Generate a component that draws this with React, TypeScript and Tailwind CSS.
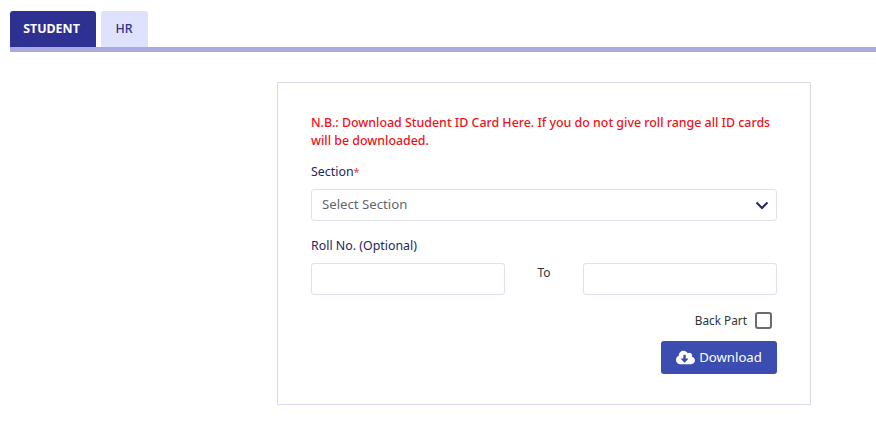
import { FaCloudDownloadAlt } from "react-icons/fa";

export default function App() {
  return (
    <div className="min-h-[422px] bg-white pt-[11px] font-['Noto_Sans',sans-serif] text-[12.4px]">
      {/* Tabs */}
      <div className="ml-[10px] flex gap-[5px] border-b-[5px] border-[#a9a9e3]">
        <button className="h-[36px] w-[86px] rounded-t-[3px] bg-[#2e3092] pr-[3px] text-[12.4px] font-bold text-white">
          STUDENT
        </button>
        <button className="h-[36px] w-[47px] rounded-t-[3px] bg-[#dee2fc] pr-[1px] text-[12.4px] font-medium text-[#2e3092]">
          HR
        </button>
      </div>

      {/* Card */}
      <div className="ml-[277px] mt-[30px] h-[323px] w-[534px] border border-[#d9d9ef] px-[33px] pt-[31px]">
        <p className="text-[12.4px] leading-[18px] font-medium text-[#e8141c]">
          N.B.: Download Student ID Card Here. If you do not give roll range all ID cards will be downloaded.
        </p>

        <label className="mt-[13px] block leading-[18px] text-[#26265e]">
          Section<span className="text-[11px] text-[#e0404a]">*</span>
        </label>
        <div className="mt-[8px] flex h-[32px] items-center justify-between rounded-[3px] border border-[#dfe1ec] pl-[10px] pr-[7px]">
          <span className="text-[13.2px] text-[#5f6672]">Select Section</span>
          <svg width="14" height="9" viewBox="0 0 14 9" fill="none" stroke="#24285f" strokeWidth="2">
            <path d="M1.5 1.5 7 7l5.5-5.5" />
          </svg>
        </div>

        <label className="mt-[16px] block leading-[18px] text-[#26265e]">Roll No. (Optional)</label>
        <div className="mt-[8px] flex items-start">
          <input className="h-[32px] w-[194px] rounded-[3px] border border-[#dfe1ec]" />
          <span className="w-[78px] pt-[1px] text-center text-[12px] leading-[18px] text-[#333]">To</span>
          <input className="h-[32px] w-[194px] rounded-[3px] border border-[#dfe1ec]" />
        </div>

        <div className="mt-[16px] flex items-center justify-end gap-[8px] pr-[5px]">
          <span className="text-[11.8px] leading-[18px] text-[#333]">Back Part</span>
          <span className="h-[17px] w-[17px] rounded-[3px] border-2 border-[#6b6b6b]" />
        </div>

        <div className="mt-[12px] flex justify-end">
          <button className="flex h-[33px] w-[116px] items-center justify-center gap-[4px] rounded-[3px] bg-[#3b4db0] text-[13.2px] text-white">
            <FaCloudDownloadAlt className="text-[19px]" />
            Download
          </button>
        </div>
      </div>
    </div>
  );
}
